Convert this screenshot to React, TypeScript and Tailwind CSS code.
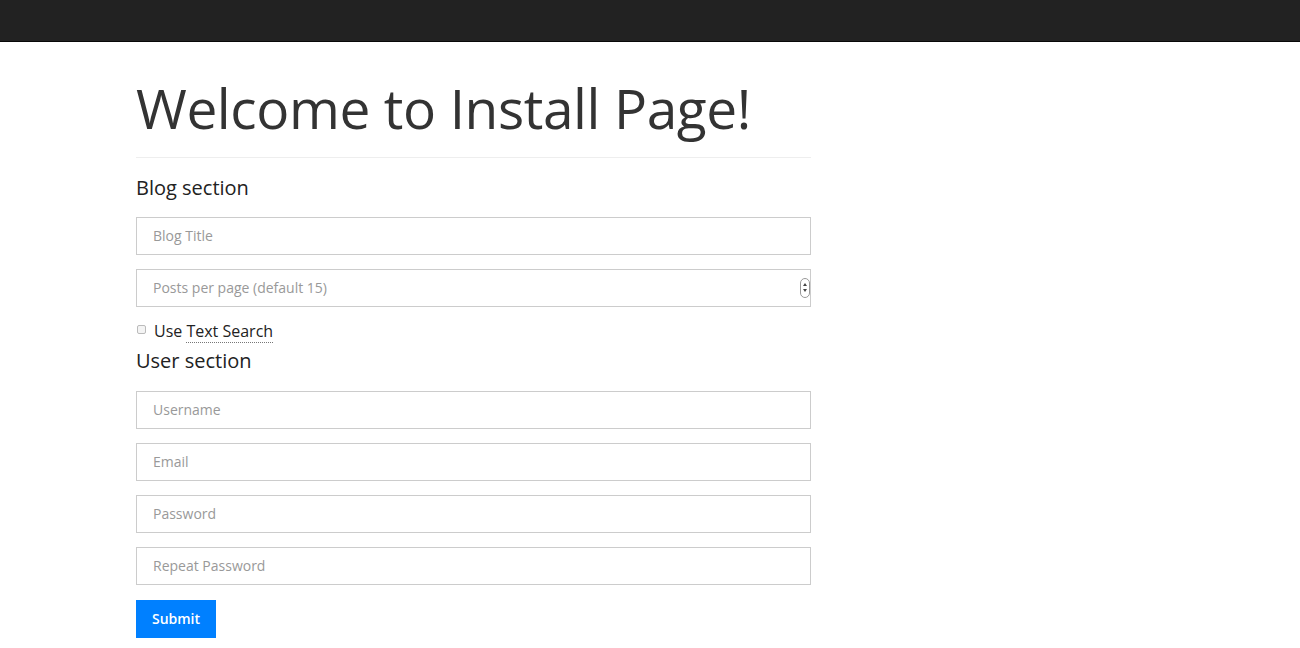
import React from "react";

const Field = ({ placeholder, type = "text" }: { placeholder: string; type?: string }) => (
  <input
    type={type}
    placeholder={placeholder}
    className="block w-[675px] h-[38px] border border-[#cccccc] px-4 text-[14px] text-[#333] placeholder:text-[#999] outline-none bg-white"
    style={{ fontFamily: "'Open Sans', sans-serif" }}
  />
);

export default function App() {
  return (
    <div className="min-h-[648px] bg-white" style={{ fontFamily: "'Open Sans', sans-serif" }}>
      <div className="h-[42px] bg-[#222222] border-b border-[#080808]" />
      <div className="pl-[136px]">
        <h1 className="text-[55px] leading-[1.1] text-[#333] font-normal mt-[36px] tracking-[-0.4px]">Welcome to Install Page!</h1>
        <hr className="w-[675px] border-0 border-t border-[#eeeeee] mt-[18px]" />
        <h3 className="text-[20px] leading-[1.1] text-[#222] mt-[19px] mb-[18px]">Blog section</h3>
        <div className="flex flex-col gap-[14px]">
          <Field placeholder="Blog Title" />
          <div className="relative w-[675px]">
            <Field placeholder="Posts per page (default 15)" />
            <div className="absolute right-[1px] top-[9px] w-[10px] h-[20px] border border-[#999] rounded-[5px] flex flex-col items-center justify-center gap-[3px] bg-white">
              <div className="w-0 h-0 border-l-[2px] border-r-[2px] border-b-[3px] border-l-transparent border-r-transparent border-b-[#444]" />
              <div className="w-0 h-0 border-l-[2px] border-r-[2px] border-t-[3px] border-l-transparent border-r-transparent border-t-[#444]" />
            </div>
          </div>
        </div>
        <label className="flex items-center mt-[14px] text-[16px] leading-[20px] text-[#222]">
          <span className="w-[9px] h-[9px] border border-[#bbb] rounded-[2px] bg-[#f4f4f4] ml-[1px] mr-[8px] -mt-[2px]" />
          <span>Use <abbr title="Text Search" className="no-underline border-b border-dotted border-[#777]">Text Search</abbr></span>
        </label>
        <h3 className="text-[20px] leading-[1.1] text-[#222] mt-[9px] mb-[19px]">User section</h3>
        <div className="flex flex-col gap-[14px]">
          <Field placeholder="Username" />
          <Field placeholder="Email" type="email" />
          <Field placeholder="Password" type="password" />
          <Field placeholder="Repeat Password" type="password" />
        </div>
        <button className="mt-[15px] w-[80px] h-[38px] bg-[#0080ff] text-white text-[14px] font-semibold">Submit</button>
      </div>
    </div>
  );
}
